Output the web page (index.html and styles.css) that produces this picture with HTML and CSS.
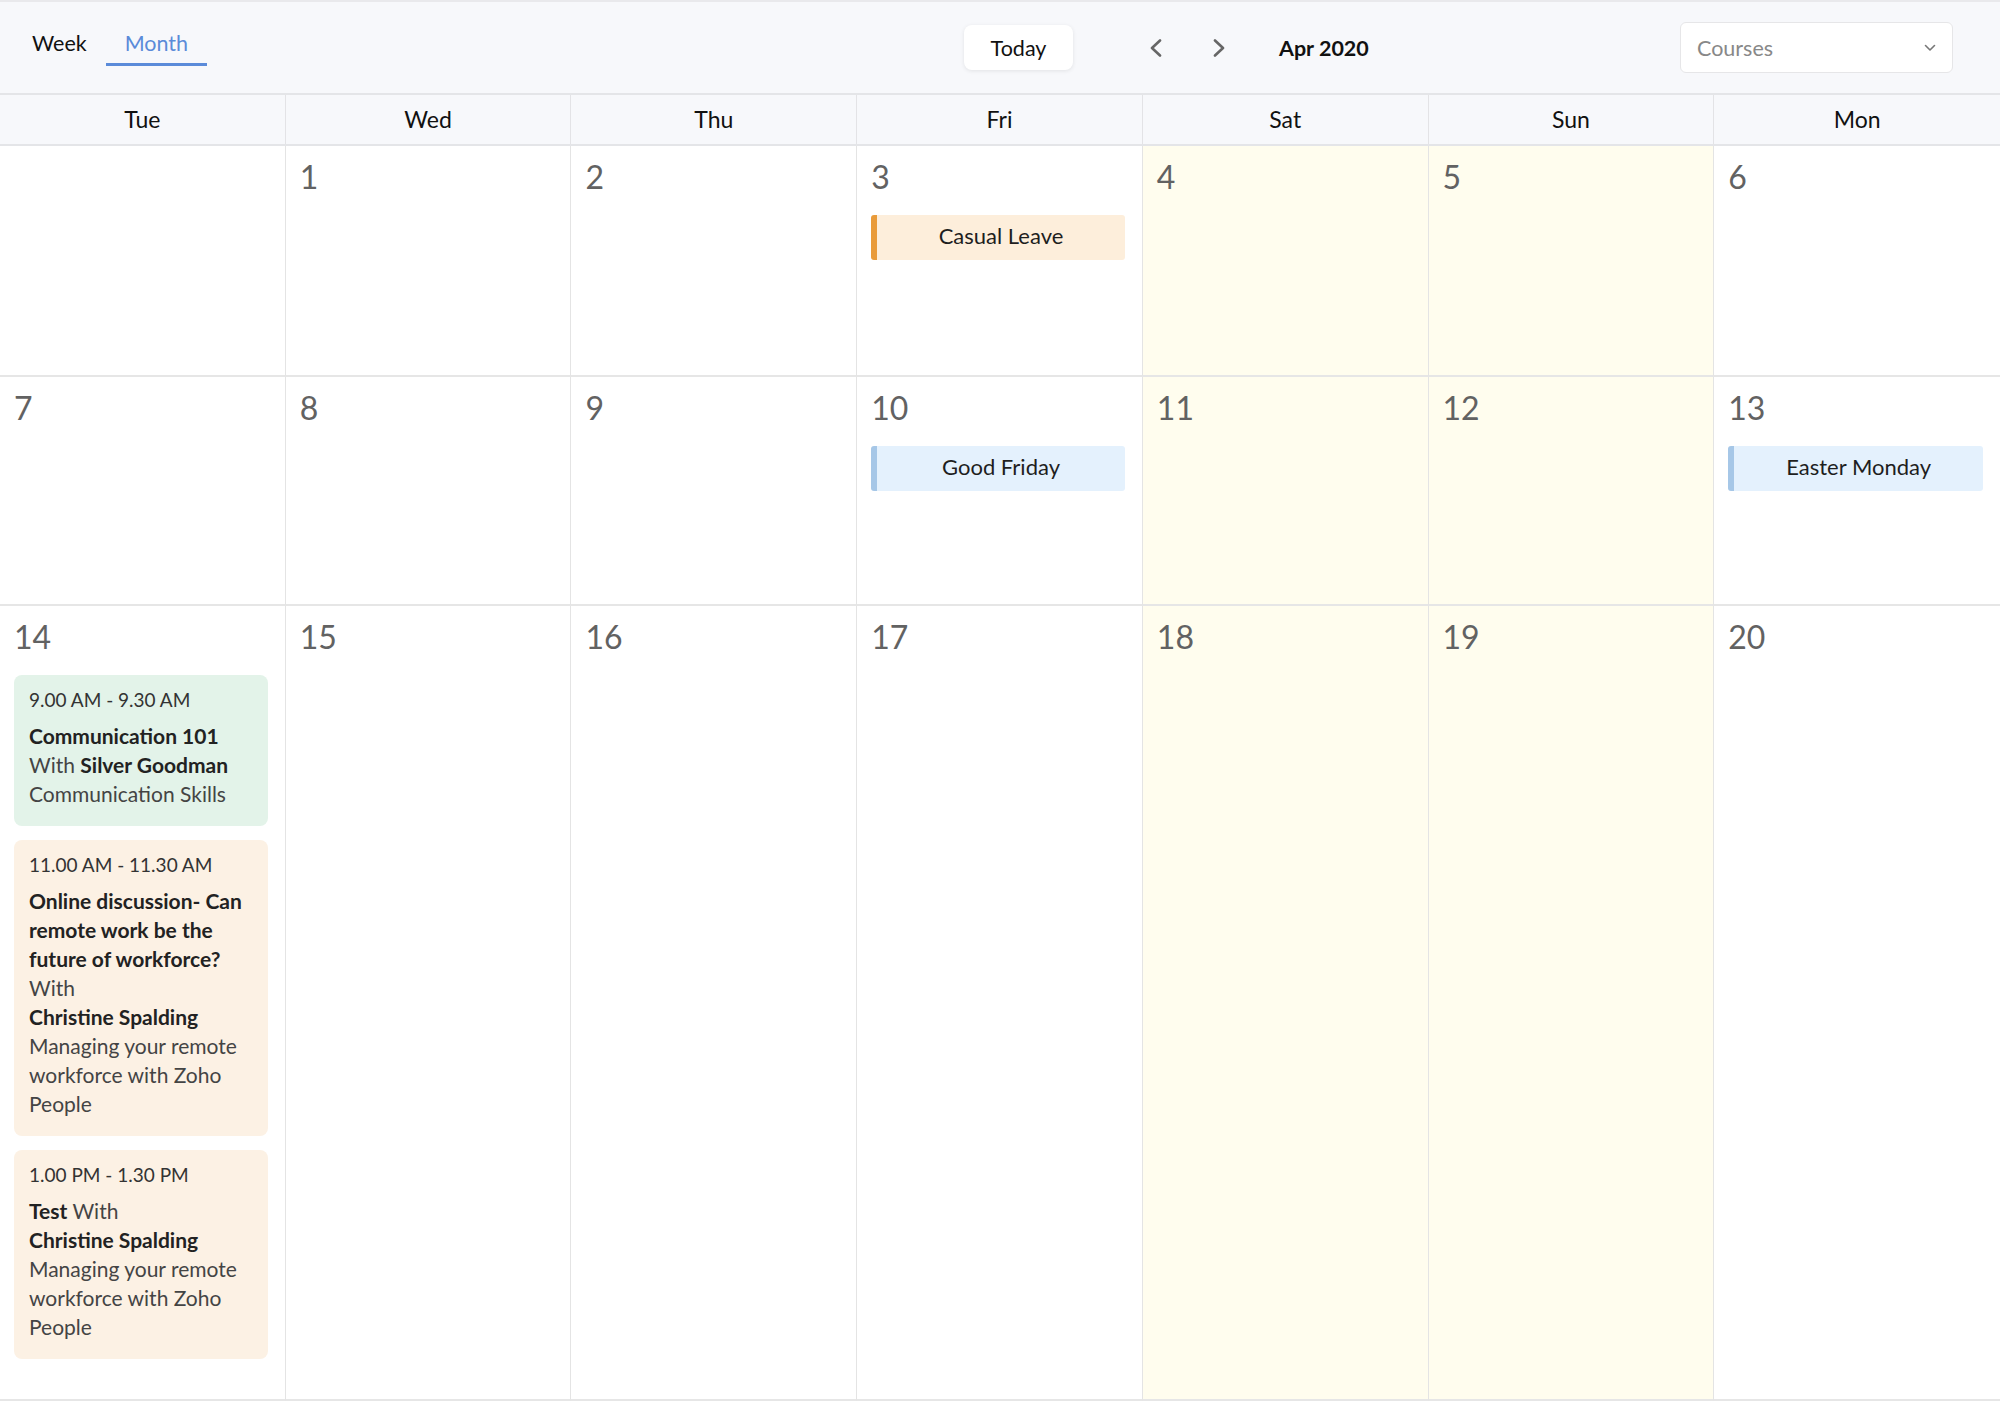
FILE: index.html
```html
<!DOCTYPE html>
<html lang="en">
<head>
<meta charset="utf-8">
<title>Calendar • Apr 2020</title>
<link rel="stylesheet" href="styles.css">
</head>
<body>

<div class="toolbar">
    <div class="tabs">
        <span class="tab">Week</span>
        <span class="tab active">Month</span>
    </div>

    <div class="nav">
        <button class="today">Today</button>
        <button class="arrow" aria-label="Previous">
            <svg width="13" height="18" viewBox="0 0 13 18"><path d="M11 1.5 L3 9 L11 16.5" fill="none" stroke="#666" stroke-width="2.6" stroke-linecap="round" stroke-linejoin="round"/></svg>
        </button>
        <button class="arrow" aria-label="Next">
            <svg width="13" height="18" viewBox="0 0 13 18"><path d="M2 1.5 L10 9 L2 16.5" fill="none" stroke="#666" stroke-width="2.6" stroke-linecap="round" stroke-linejoin="round"/></svg>
        </button>
        <span class="period">Apr 2020</span>
    </div>

    <div class="select">
        <span>Courses</span>
        <svg width="12" height="8" viewBox="0 0 12 8"><path d="M1.5 1.5 L6 6 L10.5 1.5" fill="none" stroke="#777" stroke-width="1.6" stroke-linecap="round" stroke-linejoin="round"/></svg>
    </div>
</div>

<div class="weekdays">
    <div>Tue</div>
    <div>Wed</div>
    <div>Thu</div>
    <div>Fri</div>
    <div>Sat</div>
    <div>Sun</div>
    <div>Mon</div>
</div>

<div class="month">
    <!-- week 1 -->
    <div class="day"></div>
    <div class="day"><div class="num">1</div></div>
    <div class="day"><div class="num">2</div></div>
    <div class="day">
        <div class="num">3</div>
        <div class="bar leave">Casual Leave</div>
    </div>
    <div class="day weekend"><div class="num">4</div></div>
    <div class="day weekend"><div class="num">5</div></div>
    <div class="day"><div class="num">6</div></div>

    <!-- week 2 -->
    <div class="day"><div class="num">7</div></div>
    <div class="day"><div class="num">8</div></div>
    <div class="day"><div class="num">9</div></div>
    <div class="day">
        <div class="num">10</div>
        <div class="bar holiday">Good Friday</div>
    </div>
    <div class="day weekend"><div class="num">11</div></div>
    <div class="day weekend"><div class="num">12</div></div>
    <div class="day">
        <div class="num">13</div>
        <div class="bar holiday">Easter Monday</div>
    </div>

    <!-- week 3 -->
    <div class="day">
        <div class="num">14</div>

        <div class="card green">
            <div class="time">9.00 AM - 9.30 AM</div>
            <div class="line"><b>Communication 101</b> With <b class="who">Silver Goodman</b></div>
            <div class="line">Communication Skills</div>
        </div>

        <div class="card peach">
            <div class="time">11.00 AM - 11.30 AM</div>
            <div class="line"><b>Online discussion- Can remote work be the future of workforce?</b> With <b class="who">Christine Spalding</b></div>
            <div class="line">Managing your remote workforce with Zoho People</div>
        </div>

        <div class="card peach">
            <div class="time">1.00 PM - 1.30 PM</div>
            <div class="line"><b>Test</b> With <b class="who">Christine Spalding</b></div>
            <div class="line">Managing your remote workforce with Zoho People</div>
        </div>
    </div>
    <div class="day"><div class="num">15</div></div>
    <div class="day"><div class="num">16</div></div>
    <div class="day"><div class="num">17</div></div>
    <div class="day weekend"><div class="num">18</div></div>
    <div class="day weekend"><div class="num">19</div></div>
    <div class="day"><div class="num">20</div></div>
</div>

</body>
</html>
```

FILE: styles.css
```css
body { margin: 0; font-family: Lato, "Open Sans", sans-serif; color: #111; background: #fff; }
button { font-family: inherit; cursor: pointer; }

/* toolbar */
.toolbar { display: flex; align-items: center; height: 91px; padding: 0 47px 0 13px; background: #f7f8fb; border-top: 2px solid #e9e9ec; border-bottom: 2px solid #e4e5e8; font-size: 21.5px; }
.tabs { display: flex; align-self: flex-start; width: 951px; margin-top: 27px; }
.tab { line-height: 28px; padding: 0 19px 6px; border-bottom: 3px solid transparent; color: #111; }
.tab.active { color: #5b8bd9; border-bottom-color: #5b8bd9; }

.nav { display: flex; align-items: center; }
.today { width: 109px; height: 45px; padding: 0; font-size: 21.5px; color: #111; background: #fff; border: 0; border-radius: 8px; box-shadow: 0 1px 4px rgba(0, 0, 0, .09); }
.arrow { display: flex; align-items: center; justify-content: center; width: 40px; height: 40px; padding: 0; background: none; border: 0; }
.today + .arrow { margin-left: 62px; }
.arrow + .arrow { margin-left: 24px; }
.period { margin-left: 40px; font-weight: bold; color: #111; }

.select { display: flex; align-items: center; justify-content: space-between; box-sizing: border-box; width: 273px; height: 51px; margin-left: auto; padding: 0 16px; color: #888; background: #fff; border: 1px solid #e6e6e8; border-radius: 6px; }

/* grid */
.weekdays { display: grid; grid-template-columns: repeat(7, 1fr); background: #f7f8fb; border-bottom: 2px solid #e4e5e8; }
.weekdays div { height: 49px; line-height: 49px; text-align: center; font-size: 23px; color: #111; border-right: 1px solid #e3e3e6; }
.weekdays div:last-child { border-right: 0; }

.month { display: grid; grid-template-columns: repeat(7, 1fr); grid-template-rows: 231px 229px 795px; }
.day { box-sizing: border-box; padding: 12px 17px 0 14px; border-right: 1px solid #e4e4e4; border-bottom: 2px solid #e6e6e6; }
.day:nth-child(7n) { border-right: 0; }
.weekend { background: #fffdee; }
.num { font-size: 32px; line-height: 38px; color: #626262; margin-bottom: 19px; }

/* all-day bars */
.bar { box-sizing: border-box; height: 45px; line-height: 42px; text-align: center; font-size: 22px; color: #1e1e1e; border-left: 6px solid; border-radius: 3px; }
.leave { background: #fdeedb; border-left-color: #e99b3a; }
.holiday { background: #e4f1fd; border-left-color: #a6c7e7; }

/* timed events */
.card { padding: 12px 22px 18px 15px; margin-bottom: 14px; border-radius: 8px; font-size: 21px; line-height: 29px; color: #444; }
.card b { color: #222; }
.card .who { display: inline-block; }
.time { font-size: 19px; line-height: 26px; color: #333; margin-bottom: 8px; }
.green { background: #e3f3e9; }
.peach { background: #fcf1e4; }
```
